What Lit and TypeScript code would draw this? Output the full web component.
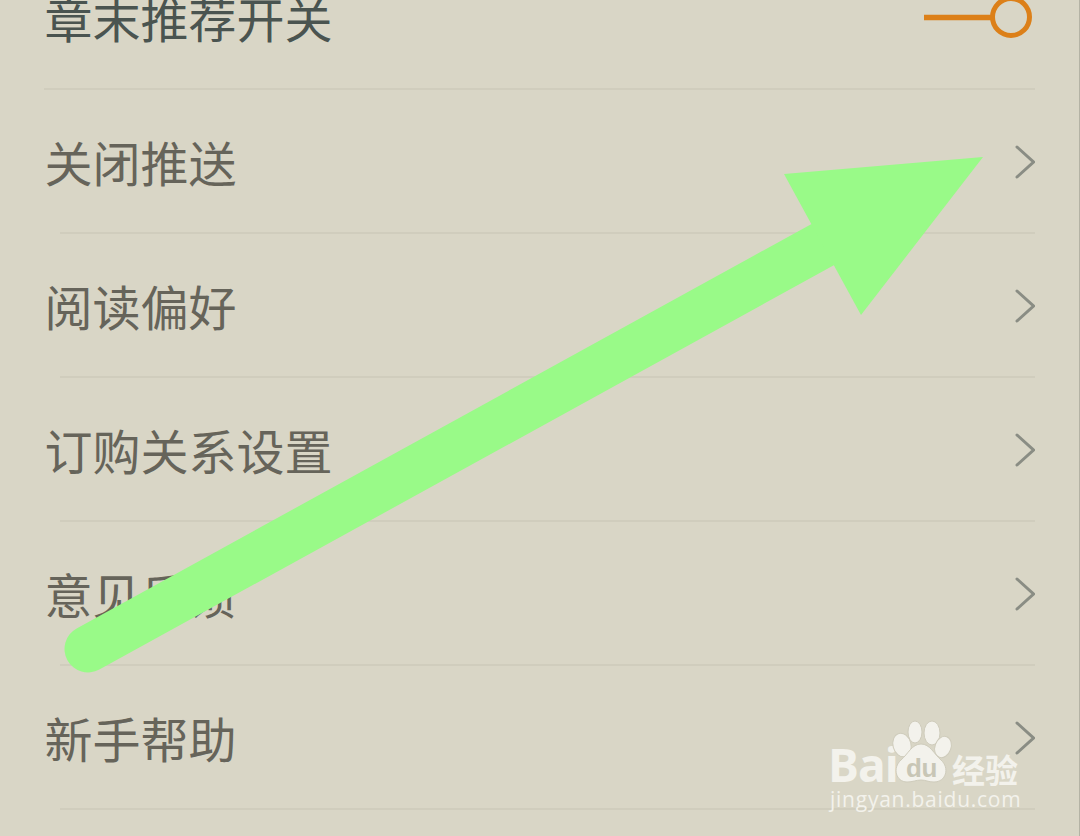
import { LitElement, html, css, svg } from "lit";
import { customElement } from "lit/decorators.js";

const ROWS = ["关闭推送", "阅读偏好", "订购关系设置", "意见反馈", "新手帮助"];

@customElement("app-root")
export class AppRoot extends LitElement {
  static styles = css`
    :host {
      display: block;
      position: relative;
      width: 1080px;
      height: 836px;
      overflow: hidden;
      background: #d9d6c6;
      font-family: "Liberation Sans", "Noto Sans CJK SC", sans-serif;
    }
    .list { display: flex; flex-direction: column; margin-top: -54px; }
    .row {
      height: 142px;
      display: flex;
      align-items: center;
      justify-content: space-between;
      padding: 0 45px 0 45px;
      font-size: 48px;
      line-height: 1;
      color: #66645a;
      font-family: "Noto Sans CJK SC", sans-serif;
    }
    .row.first { color: #4a5450; }
    .row span { position: relative; top: 0; left: -0.5px; }
    .divider { height: 2px; background: #d0cdbd; margin: 0 45px 0 60px; }
    .divider.first { margin-left: 44px; }
    .chev { width: 22px; height: 36px; display: block; margin-top: 2px; }
    .toggle { width: 110px; height: 48px; display: block; margin-right: 3px; }
    .edge { position: absolute; top: 0; right: 0; width: 1px; height: 100%; background: #b4b3a5; }
    .arrow { position: absolute; left: 0; top: 0; width: 1080px; height: 836px; }
    .mark { position: absolute; left: 828px; top: 720px; width: 200px; height: 100px; color: #f3f2ec; }
    .bai {
      position: absolute; left: 0; top: 24px;
      font: bold 46px/40px "Open Sans", sans-serif;
      letter-spacing: -1px;
    }
    .paw { position: absolute; left: 62px; top: 0; width: 70px; height: 64px; display: block; }
    .du {
      position: absolute; left: 78px; top: 35px;
      font: bold 26px/27px "Liberation Sans", sans-serif;
      color: #c8c6b6;
      letter-spacing: -0.5px;
    }
    .jy {
      position: absolute; left: 124px; top: 33px;
      font: bold 33px/33px "Noto Sans CJK SC", sans-serif;
    }
    .url {
      position: absolute; left: 2px; top: 68px;
      font: 21px/22px "Open Sans", sans-serif;
      letter-spacing: 0.75px;
      white-space: nowrap;
    }
  `;

  private chevron() {
    return html`<svg class="chev" viewBox="0 0 22 36">
      <path d="M4 3 L20.5 18 L4 33" fill="none" stroke="#8a8d84" stroke-width="3" stroke-linecap="round" stroke-linejoin="miter"/>
    </svg>`;
  }

  render() {
    return html`
      <div class="list">
        <div class="row first">
          <span>章末推荐开关</span>
          <svg class="toggle" viewBox="0 0 110 48">
            <path d="M2 24.5 H70" stroke="#dc8019" stroke-width="5.5" fill="none"/>
            <circle cx="89" cy="24" r="18.5" stroke="#dc8019" stroke-width="5" fill="none"/>
          </svg>
        </div>
        <div class="divider first"></div>
        ${ROWS.map(
          (r) => html`<div class="row"><span>${r}</span>${this.chevron()}</div><div class="divider"></div>`
        )}
      </div>
      <div class="edge"></div>
      <svg class="arrow" viewBox="0 0 1080 836">
        ${svg`<line x1="88" y1="649" x2="822" y2="245" stroke="#99fa88" stroke-width="47" stroke-linecap="round"/>
        <polygon points="983,157 784,174 861,315" fill="#99fa88"/>`}
      </svg>
      <div class="mark">
        <span class="bai">Bai</span>
        <svg class="paw" viewBox="0 0 70 64">
          <g fill="#f3f2ec" stroke="#cfccbc" stroke-width="1">
            <ellipse cx="12" cy="25" rx="9" ry="12" transform="rotate(-15 12 25)"/>
            <ellipse cx="25" cy="12" rx="7" ry="11"/>
            <ellipse cx="42" cy="13" rx="8" ry="12"/>
            <ellipse cx="53" cy="27" rx="8" ry="11" transform="rotate(20 53 27)"/>
            <path d="M31 24 C40 24 44 34 51 40 C60 48 56 62 44 62 C38 62 36 60 31 60 C26 60 23 62 17 62 C6 62 2 48 11 40 C18 34 22 24 31 24 Z"/>
          </g>
        </svg>
        <span class="du">du</span>
        <span class="jy">经验</span>
        <span class="url">jingyan.baidu.com</span>
      </div>
    `;
  }
}
